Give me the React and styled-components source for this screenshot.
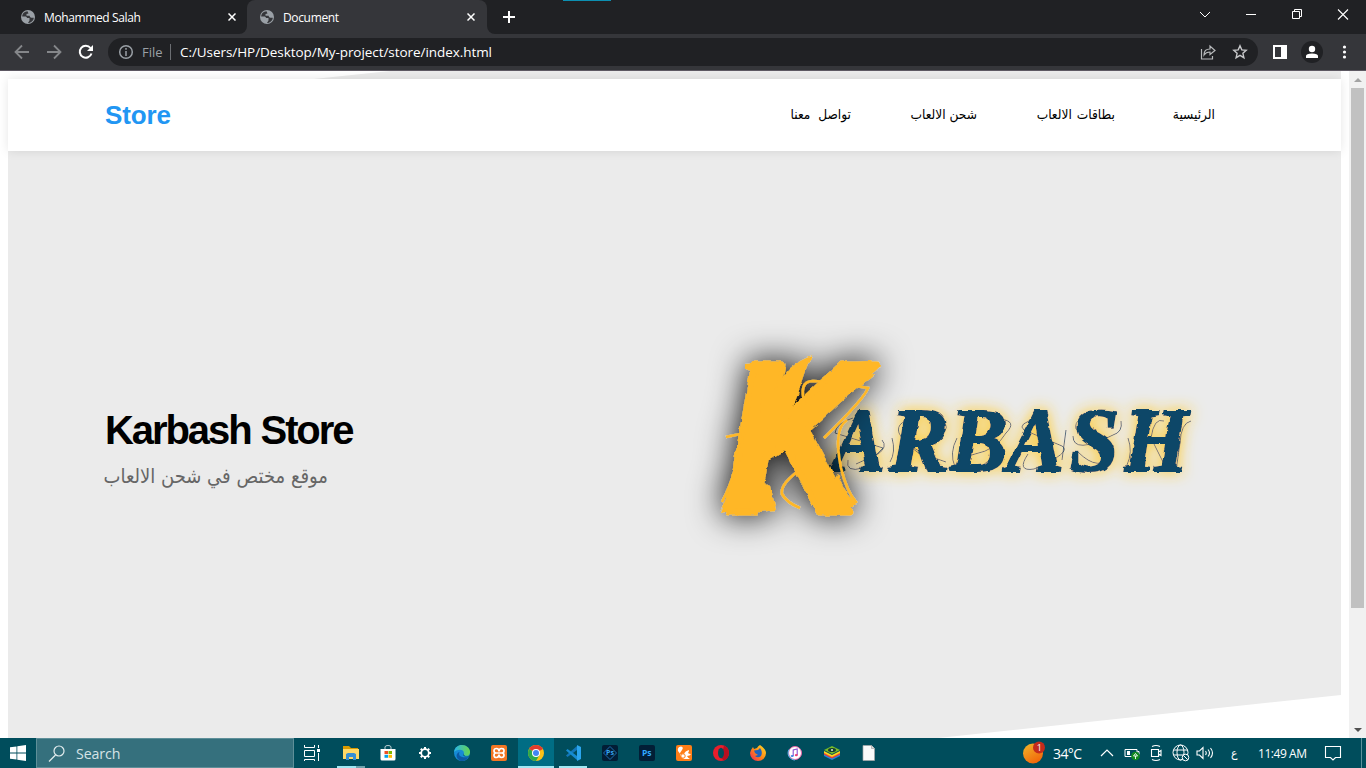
import React from "react";
import styled, { createGlobalStyle } from "styled-components";

const Global = createGlobalStyle`
  *{box-sizing:border-box}
  body{margin:0;background:#fff;overflow:hidden}
  svg{display:block;flex:none}
`;
const ui = `"Open Sans","Noto Sans",sans-serif`;
const arabic = `"DejaVu Sans Condensed","DejaVu Sans",sans-serif`;

const Desktop = styled.div`
  width:1366px;height:768px;display:flex;flex-direction:column;overflow:hidden;font-family:${ui};
`;

/* ---------- browser frame ---------- */
const TabStrip = styled.div`
  height:34px;background:#202124;display:flex;color:#fff;flex:none;position:relative;
`;
const Tab = styled.div`
  width:${p => p.$w}px;height:34px;display:flex;align-items:center;
  padding:0 ${p => (p.$active ? 12 : 11)}px 0 ${p => p.$pad}px;font-size:12px;
  letter-spacing:${p => p.$ls || 0}px;
  background:${p => (p.$active ? "#35363a" : "#202124")};
  border-radius:${p => (p.$active ? "8px 8px 0 0" : "0 0 8px 0")};
`;
const TabSlot = styled.div`
  background:${p => (p.$under ? "#35363a" : "transparent")};
  ${p => p.$fill && "flex:1;display:flex;"}
`;
const TabTitle = styled.span`margin-left:8px;flex:1;white-space:nowrap;`;
const NewTab = styled.div`
  flex:1;background:#202124;border-bottom-left-radius:8px;padding:10px 0 0 15px;
`;
const Captions = styled.div`display:flex;gap:30px;padding:6px 15px 0 0;background:#202124;`;
const Accent = styled.div`position:absolute;left:563px;top:0;width:48px;height:1px;background:#0c8fb1;`;

const Toolbar = styled.div`
  height:37px;background:#35363a;border-bottom:1px solid #5d5862;display:flex;align-items:center;
  padding:0 0 0 14px;flex:none;
`;
const NavButtons = styled.div`display:flex;gap:16px;width:94px;`;
const Address = styled.div`
  height:28px;width:1150px;border-radius:14px;background:#202124;display:flex;align-items:center;
  padding:0 10px 0 10px;color:#fff;font-size:13.5px;
`;
const Scheme = styled.span`color:#9aa0a6;margin-left:8px;width:28px;font-size:13px;`;
const Divider = styled.i`width:1px;height:16px;background:#6b6e72;margin-right:9px;`;
const Url = styled.span`flex:1;white-space:nowrap;font-size:13.5px;letter-spacing:-.06px;`;
const AddressActions = styled.div`display:flex;gap:16px;`;
const ToolbarActions = styled.div`display:flex;align-items:center;gap:10px;margin-left:14px;`;
const Avatar = styled.div`
  width:22px;height:22px;border-radius:50%;background:#202124;display:grid;place-items:center;margin-left:3px;
`;

/* ---------- page ---------- */
const Viewport = styled.div`height:667px;display:flex;background:#fff;flex:none;`;
const Page = styled.div`
  width:1349px;height:667px;display:grid;padding:0 8px;overflow:hidden;
`;
const Backdrop = styled.div`
  grid-area:1/1;background:#ebebeb;
  clip-path:polygon(0 40px,382px 0,100% 0,100% 624px,930px 100%,0 100%);
`;
const Content = styled.div`grid-area:1/1;padding-top:8px;position:relative;`;
const Navbar = styled.nav`
  height:72px;background:#fff;box-shadow:0 0 10px rgba(0,0,0,.1);display:flex;align-items:center;
  justify-content:space-between;padding:0 126px 0 97px;
`;
const Brand = styled.div`
  font:bold 26px "Liberation Sans",Arial,sans-serif;color:#2196f3;line-height:72px;letter-spacing:-.1px;
`;
const Links = styled.div`display:flex;gap:59px;font:13.6px ${arabic};color:#000;line-height:20px;`;
const NavLink = styled.a`
  width:${p => p.$w}px;white-space:nowrap;direction:rtl;word-spacing:${p => p.$ws || 0}px;
  position:relative;top:-1px;
`;
const Hero = styled.section`display:flex;padding-left:97px;`;
const Intro = styled.div`width:585px;padding-top:255px;`;
const Title = styled.h1`
  margin:0;font:bold 40px "Liberation Sans",Arial,sans-serif;line-height:48px;letter-spacing:-2.08px;
  word-spacing:1px;color:#000;
`;
const Lead = styled.p`
  margin:6px 0 0;font:20px ${arabic};line-height:32px;color:#666;direction:rtl;width:223px;white-space:nowrap;
`;
const Logo = styled.svg`margin-top:179px;overflow:visible;`;

const Scrollbar = styled.div`
  width:17px;background:#f1f1f1;display:flex;flex-direction:column;align-items:center;
`;
const Arrow = styled.div`height:17px;display:grid;place-items:center;`;
const Track = styled.div`flex:1;`;
const Thumb = styled.div`width:13px;height:520px;background:#c1c1c1;`;

/* ---------- taskbar ---------- */
const Taskbar = styled.div`
  height:30px;background:#004d5c;display:flex;align-items:stretch;color:#fff;flex:none;
`;
const Start = styled.div`width:36px;display:grid;place-items:center;`;
const Search = styled.div`
  width:258px;background:#35707d;border:1px solid #5e8f99;display:flex;align-items:center;
  padding-left:11px;gap:11px;font-size:14.2px;letter-spacing:-.1px;color:#d5e3e6;
`;
const TaskView = styled.div`width:37px;padding:7px 0 0 10px;`;
const Apps = styled.div`display:flex;gap:1px;width:690px;padding-left:2px;`;
const AppButton = styled.div`
  width:36px;display:flex;flex-direction:column;align-items:center;padding-top:7px;
  background:${p => (p.$active ? "#006d84" : "transparent")};
  justify-content:space-between;flex:none;
`;
const Running = styled.i`
  width:${p => p.$w}px;height:2px;
  background:${p => (p.$stack ? "linear-gradient(90deg,#9fe7f2 19px,#6fa3ad 19px)" : "#a0e8f3")};
`;
const Tray = styled.div`display:flex;align-items:center;flex:1;`;
const TrayIcon = styled.div`width:${p => p.$w}px;display:grid;place-items:center;flex:none;`;
const TrayText = styled.div`
  width:${p => p.$w}px;font-size:${p => p.$size || 12}px;white-space:nowrap;letter-spacing:${p => p.$ls || 0}px;
  font-family:${p => (p.$ar ? arabic : ui)};padding-left:${p => p.$indent || 0}px;flex:none;
`;
const Peek = styled.div`width:1px;align-self:stretch;background:#5b929c;margin-left:19px;`;

const Globe = () => (
  <svg width="16" height="16" viewBox="0 0 16 16">
    <circle cx="8" cy="8" r="7" fill="#9aa0a6" />
    <path d="M7.500 2.300C4.500 2.400 2.300 4.600 2.200 7.500H5c1.300 0 2 .7 2 1.500h2.500v2.500L8 14c3.300-.2 5.700-2.600 5.800-5.300h-2.300c-1.300 0-1.800-1-1.800-1.900H6.500V5l2-.5z" fill="#35363a" />
  </svg>
);
const Cross = ({ s = 8, w = 1.5 }) => (
  <svg width={s} height={s} viewBox="0 0 8 8"><path d="M.5.5l7 7m0-7l-7 7" stroke="#fff" strokeWidth={w} /></svg>
);
const Line = ({ d, w = 16, h = 16, c = "#fff", sw = 1.2, children }) => (
  <svg width={w} height={h} viewBox={`0 0 ${w} ${h}`} fill="none" stroke={c} strokeWidth={sw}><path d={d} />{children}</svg>
);

const letters = [
  ["A", 832, 53], ["R", 889, 60], ["B", 950, 57], ["A", 1007, 57], ["S", 1069, 50], ["H", 1124, 64]
];

const KarbashLogo = () => (
  <Logo width="530" height="230" viewBox="690 330 530 230">
    <defs>
      <filter id="rough" x="-20%" y="-20%" width="140%" height="140%">
        <feTurbulence type="fractalNoise" baseFrequency=".12" numOctaves="2" seed="4" />
        <feDisplacementMap in="SourceGraphic" scale="4" xChannelSelector="R" yChannelSelector="G" />
      </filter>
      <filter id="gold" x="-10%" y="-50%" width="120%" height="200%">
        <feDropShadow dx="0" dy="0" stdDeviation="7.5" floodColor="#ffc928" floodOpacity="1" />
      </filter>
      <filter id="dark" x="-50%" y="-50%" width="200%" height="200%">
        <feDropShadow dx="0" dy="0" stdDeviation="17" floodColor="#000" floodOpacity="1" />
      </filter>
    </defs>
    <g filter="url(#gold)">
      <g filter="url(#rough)" fill="#0b4767" stroke="#0b4767" strokeWidth="2.2" fontFamily="'Liberation Serif',serif" fontWeight="bold" fontStyle="italic" fontSize="91">
        {letters.map(([c, x, w], i) => (
          <text key={i} x={x} y="471" textLength={w} lengthAdjust="spacingAndGlyphs">{c}</text>
        ))}
      </g>
      <g fill="none" stroke="#0b4767" strokeWidth="1" strokeOpacity=".8">
        <path d="M853 418q-17 5-18 15l48 15-20 20q-18 5-15-8M882 440q6 7-4 14l-22 10" />
        <path d="M920 418q-25 2-21 15 7 16 47 29M943 422q14 10-31 26l29 22M892 438q4 14-2 24" />
        <path d="M1000 419q18 2 6 14-10 17-31 21-25 7-17 15M957 438q-8 15-2 29 18 11 37-10" />
        <path d="M1038 418q-22 6-14 12l38 16q11 6-28 23-18 3-6-15M1066 430l-4 30" />
        <path d="M1098 414q-25 3-22 15 35 18 37 26-14 18-35-3M1073 436q0 19 40-1 10-3 8-14" />
        <path d="M1164 421q-10-4-13 17l14 28q8-2 6-24M1191 421q-10 2-11 22l-4 28M1128 438q5 14-1 27" />
      </g>
    </g>
    <g filter="url(#dark)">
      <g filter="url(#rough)" fill="#ffb726" stroke="#ffb726" strokeLinejoin="round">
        <text x="725" y="512" textLength="140" lengthAdjust="spacingAndGlyphs" fontFamily="'Liberation Sans',sans-serif" fontWeight="bold" fontStyle="italic" fontSize="213" strokeWidth="7">K</text>
        <path stroke="none" d="M745 365l37-2-7 28Q786 364 812 356q-8 14-14 38l-16 40-22-18 1-40-16-7z" />
        <path stroke="none" d="M822 378q19-17 50-17l-13 14 16-1-20 16-20 8z" />
        <path stroke="none" d="M738 470l-18 43q17-2 29-16l2 16 25-3-6-24z" />
        <path stroke="none" d="M838 474q8 23 20 29l-20 13-22-9z" />
      </g>
      <g fill="none" stroke="#ffb726" strokeWidth="2.600">
        <path d="M726 437l14-3q-1 36-18 68" />
        <path d="M805 405q-7-24 8-24l16 1M856 386l12 2q-3 10-44 50M847 420q-14 9-6 48 6 24 15 34M797 472q-17 13-15 22 5 9 18 14" />
      </g>
    </g>
  </Logo>
);

const Shell = ({ bg, children }) => (
  <svg width="16" height="16" viewBox="0 0 16 16"><rect width="16" height="16" rx="2" fill={bg} />{children}</svg>
);
const Explorer = () => <svg width="18" height="16" viewBox="0 0 18 16"><path d="M1 1h6l2 2h7v3H1z" fill="#d99a00" /><path d="M1 4h16v10H1z" fill="#ffd866" /><path d="M4 15V9l2-1h6l2 1v6h-3v-3H7v3z" fill="#368ed4" /></svg>;
const Store = () => <svg width="16" height="16" viewBox="0 0 16 16"><path d="M5 4V2q0-1.5 3-1.5T11 2v2" fill="none" stroke="#b9cdd1" /><path d="M.5 4h15v10q0 1.5-1.5 1.5H2Q.5 15.5.5 14z" fill="#fff" /><path d="M4.5 6H8v3H4.5z" fill="#ef5025" /><path d="M8.5 6H12v3H8.5z" fill="#7fb900" /><path d="M4.5 9.8H8v3H4.5z" fill="#00a3ee" /><path d="M8.5 9.8H12v3H8.5z" fill="#ffb800" /></svg>;
const Gear = () => <svg width="16" height="16" viewBox="0 0 16 16"><circle cx="8" cy="8" r="3.8" fill="none" stroke="#fff" strokeWidth="1.8" />{[0, 45, 90, 135].map(a => <path key={a} transform={`rotate(${a} 8 8)`} d="M8 2v2.2M8 11.8V14" stroke="#fff" strokeWidth="2" />)}</svg>;
const Edge = () => <svg width="16" height="16" viewBox="0 0 16 16"><defs><linearGradient id="eg"><stop stopColor="#28b4e9" /><stop offset="1" stopColor="#66d64d" /></linearGradient></defs><circle cx="8" cy="8" r="8" fill="#168bd5" /><path d="M0 7C1 2 4 0 8 0c6 0 10 6 7 10-1.5 1.5-6 1-5.2-1C11 5 5 3 0 7z" fill="url(#eg)" /><path d="M5.5 7Q3 13 14.5 12.3 11 17 6 15.7C1 13 2 8 5.500 7z" fill="#0c59a4" /><path d="M9.800 8.200Q8 11 12 11.500h3L16 10q-2 2-5 1-2-1-1.200-2.800z" fill="#004d5c" /></svg>;
const Xampp = () => <Shell bg="#f37623"><path d="M8 6.500Q8 3.500 5.500 3.500T3 5.700 5 8q-2 0-2 2.300t2.500 2.200T8 9.500q0 3 2.500 3t2.500-2.200T11 8q2 0 2-2.300t-2.500-2.200T8 6.500zM5 8h6" fill="none" stroke="#fff" strokeWidth="1.700" /></Shell>;
const Chrome = () => <svg width="16" height="16" viewBox="0 0 16 16"><circle cx="8" cy="8" r="8" fill="#fbc116" /><path d="M8 8L1.100 4A8 8 0 0 1 14.900 4z" fill="#e33b2e" /><path d="M8 8L1.100 4A8 8 0 0 0 8 16l3.500-6z" fill="#2da94f" /><circle cx="8" cy="8" r="4" fill="#fff" /><circle cx="8" cy="8" r="3" fill="#4285f4" /></svg>;
const Code = () => <svg width="17" height="16" viewBox="0 0 17 16"><path d="M12 1L1 10.500 2.500 12 12 5z" fill="#1276b8" /><path d="M12 15L1 5.500 2.500 4 12 11z" fill="#168bd1" /><path d="M12 0l4 2v12l-4 2z" fill="#2ba5ed" /></svg>;
const PsExpress = () => <Shell bg="#021d35"><path d="M8 1.500L14.500 8 8 14.500 1.500 8z" fill="none" stroke="#1d6bad" /><text x="4" y="10.200" fontSize="7" fontWeight="bold" fontFamily="Open Sans" fill="#36a5f4">Ps</text></Shell>;
const Ps = () => <Shell bg="#021e36"><text x="3" y="10.800" fontSize="8.500" fontWeight="bold" fontFamily="Open Sans" fill="#31a8ff">Ps</text></Shell>;
const Uc = () => <Shell bg="#ff7e17"><path d="M2 6Q1 2 5 1.500q3 .5 1 3.500L4 8q0 4 4 6h6q-2-1-3-3 3 0 4-2-2 0-3-1 1-1 1-3-4 1-5 4-2-1-3 1" fill="#fff" /><circle cx="7" cy="11" r="2.200" fill="#fff" stroke="#ff7e17" /></Shell>;
const Opera = () => <svg width="16" height="16" viewBox="0 0 16 16"><circle cx="8" cy="8" r="8" fill="#e81e2c" /><path d="M11 .600a8 8 0 0 1 0 14.800L8 13z" fill="#b80f20" /><ellipse cx="8" cy="8" rx="3" ry="5.300" fill="#004d5c" /></svg>;
const Firefox = () => <svg width="16" height="16" viewBox="0 0 16 16"><defs><linearGradient id="ff" x1="1" x2="0" y2="1"><stop stopColor="#ffe226" /><stop offset=".5" stopColor="#ff8a16" /><stop offset="1" stopColor="#ef1d5c" /></linearGradient></defs><path d="M1 5l2-3 1 2 3-1Q8 1 10 0q6 4 6 8a8 8 0 0 1-16 0z" fill="url(#ff)" /><path d="M4 5.500l4-.5 2-2q3 4 1 8-3 2.500-6 0l3-1-3-2z" fill="#1e63bd" /></svg>;
const Itunes = () => <svg width="16" height="16" viewBox="0 0 16 16"><circle cx="8" cy="8" r="6.500" fill="#fff" stroke="#ef66aa" /><path d="M2 4.500A7 7 0 0 0 8 15" fill="none" stroke="#5eb9f0" /><path d="M6.200 11V5l4-1v6" fill="none" stroke="#8c4fcf" strokeWidth="1.100" /><ellipse cx="5.200" cy="11" rx="1.500" ry="1.100" fill="#3c88e8" /><ellipse cx="9.300" cy="10.200" rx="1.500" ry="1.100" fill="#ee4179" /></svg>;
const BlueStacks = () => <svg width="18" height="16" viewBox="0 0 18 16"><path d="M1 9l8 4 8-4v2l-8 4-8-4z" fill="#2083df" /><path d="M1 7.500l8 4 8-4v2l-8 4-8-4z" fill="#ed3f37" /><path d="M1 6l8 4 8-4v2l-8 4-8-4z" fill="#ffd51c" /><path d="M1 5l8-4 8 4-8 4z" fill="#77bb27" /><ellipse cx="9" cy="5" rx="4" ry="2" fill="#173d33" /><circle cx="9" cy="5" r="1" fill="#d9f2cf" /></svg>;
const Doc = () => <svg width="16" height="16" viewBox="0 0 16 16"><path d="M2 .500h8.500l3 3v12H2z" fill="#fafafa" stroke="#a6a6a6" strokeWidth=".7" /><path d="M10.500.500v3h3" fill="#ddd" stroke="#999" strokeWidth=".6" /></svg>;

const apps = [
  { I: Explorer, w: 28, stack: true }, { I: Store }, { I: Gear }, { I: Edge }, { I: Xampp },
  { I: Chrome, w: 36, active: true }, { I: Code, w: 28 }, { I: PsExpress }, { I: Ps }, { I: Uc },
  { I: Opera }, { I: Firefox }, { I: Itunes }, { I: BlueStacks }, { I: Doc }
];

export default function App() {
  return (
    <Desktop>
      <Global />
      <TabStrip>
        <TabSlot $under><Tab $w={247} $pad={20} $ls={-0.38}><Globe /><TabTitle>Mohammed Salah</TabTitle><Cross /></Tab></TabSlot>
        <Tab $w={240} $pad={12} $active $ls={-0.35}><Globe /><TabTitle>Document</TabTitle><Cross /></Tab>
        <TabSlot $under $fill>
          <NewTab><Line w={14} h={14} sw={2} d="M7 1v12M1 7h12" /></NewTab>
          <Captions>
            <Line w={16} h={16} sw={1} d="M3 6l5 5 5-5" />
            <Line w={16} h={16} sw={1} d="M3 8.500h10" />
            <Line w={16} h={16} sw={1} d="M3.500 5.500h7v7h-7zM5.500 5V3.500h7v7H11" />
            <Line w={16} h={16} sw={1.100} d="M3 3.500l10 10M13 3.500l-10 10" />
          </Captions>
        </TabSlot>
        <Accent />
      </TabStrip>
      <Toolbar>
        <NavButtons>
          <Line sw={1.800} c="#85878a" d="M15 8H2M8 1.500L1.500 8 8 14.500" />
          <Line sw={1.800} c="#85878a" d="M1 8h13M8 1.500L14.500 8 8 14.500" />
          <svg width="16" height="16" viewBox="0 0 16 16"><path d="M13.500 9.500A6 6 0 1 1 12.500 4" fill="none" stroke="#fff" strokeWidth="2" /><path d="M15 1v6H9z" fill="#fff" /></svg>
        </NavButtons>
        <Address>
          <Line sw={1.500} c="#9aa0a6" d="M8 7v5M8 4v1.700"><circle cx="8" cy="8" r="6.300" /></Line>
          <Scheme>File</Scheme><Divider />
          <Url>C:/Users/HP/Desktop/My-project/store/index.html</Url>
          <AddressActions>
            <Line c="#b7b9bb" d="M1.500 5v10h11v-3M4 11q0-6 6-6V2l5 4.500-5 4V8q-4 0-6 3z" />
            <Line c="#c7c8ca" sw={1.400} d="M8 1.800l1.800 4.100 4.400.4-3.300 3 1 4.400L8 11.400l-3.900 2.300 1-4.400-3.300-3 4.400-.4z" />
          </AddressActions>
        </Address>
        <ToolbarActions>
          <Line w={16} h={16} c="#fff" sw={2} d="M2 2h12v12H2z"><path d="M9 1h6v14H9z" fill="#fff" stroke="none" /></Line>
          <Avatar><svg width="14" height="14" viewBox="0 0 14 14" fill="#fff"><circle cx="7" cy="4" r="3.200" /><path d="M1 13v-2q0-2.500 6-2.500t6 2.500v2z" /></svg></Avatar>
          <svg width="22" height="16" viewBox="0 0 22 16" fill="#fff"><circle cx="11.500" cy="3" r="1.600" /><circle cx="11.500" cy="8" r="1.600" /><circle cx="11.500" cy="13" r="1.600" /></svg>
        </ToolbarActions>
      </Toolbar>

      <Viewport>
        <Page>
          <Backdrop />
          <Content>
            <Navbar>
              <Brand>Store</Brand>
              <Links>
                <NavLink $w={62} $ws={4}>تواصل معنا</NavLink>
                <NavLink $w={67}>شحن الالعاب</NavLink>
                <NavLink $w={79} $ws={1}>بطاقات الالعاب</NavLink>
                <NavLink $w={41}>الرئيسية</NavLink>
              </Links>
            </Navbar>
            <Hero>
              <Intro><Title>Karbash Store</Title><Lead>موقع مختص في شحن الالعاب</Lead></Intro>
              <KarbashLogo />
            </Hero>
          </Content>
        </Page>
        <Scrollbar>
          <Arrow><svg width="8" height="4" viewBox="0 0 8 4"><path d="M0 4l4-4 4 4z" fill="#a3a3a3" /></svg></Arrow>
          <Track><Thumb /></Track>
          <Arrow><svg width="8" height="4" viewBox="0 0 8 4"><path d="M0 0l4 4 4-4z" fill="#505050" /></svg></Arrow>
        </Scrollbar>
      </Viewport>

      <Taskbar>
        <Start><svg width="16" height="16" viewBox="0 0 16 16" fill="#fff"><path d="M0 2.300L6.500 1.400v6.100H0zM7.300 1.300L16 0v7.500H7.300zM0 8.500h6.500v6.100L0 13.700zM7.300 8.500H16V16l-8.700-1.300z" /></svg></Start>
        <Search><Line w={17} h={17} c="#e2ecee" d="M7.500 10L1 16.500"><circle cx="11" cy="6" r="5" /></Line>Search</Search>
        <TaskView><svg width="16" height="16" viewBox="0 0 16 16" fill="none" stroke="#fff"><path d="M.500 0v2.500h10V0M.500 5.500h10v6H.500zM.500 16v-1.500h10V16M14.500 0v3M14.500 8v8" /><path d="M13 4h3v3h-3z" fill="#fff" stroke="none" /></svg></TaskView>
        <Apps>
          {apps.map(({ I, w, active, stack }, i) => (
            <AppButton key={i} $active={active}><I />{w && <Running $w={w} $stack={stack} />}</AppButton>
          ))}
        </Apps>
        <Tray>
          <TrayIcon $w={32}><svg width="28" height="26" viewBox="0 0 28 26"><defs><linearGradient id="sun" x2=".6" y2="1"><stop stopColor="#f1b82c" /><stop offset="1" stopColor="#f2670a" /></linearGradient></defs><circle cx="10" cy="13.500" r="10" fill="url(#sun)" /><circle cx="16" cy="7.500" r="6" fill="#c42b1c" /><text x="13.800" y="11" fontSize="9" fill="#fff" fontFamily="Open Sans">1</text></svg></TrayIcon>
          <TrayText $w={41} $size={14} $ls={-0.6}>34°C</TrayText>
          <TrayIcon $w={26}><Line w={14} h={8} d="M1 7l6-6 6 6" /></TrayIcon>
          <TrayIcon $w={24}><svg width="16" height="16" viewBox="0 0 16 16"><path d="M1 4.500h12v7H1zM13.500 6.500H15v3" fill="none" stroke="#fff" /><path d="M3 6h3v4H3z" fill="#fff" /><circle cx="11.500" cy="11" r="4.300" fill="#108a20" /><path d="M11.500 14v-3M11.500 8.500l2 2.500h-4z" stroke="#fff" strokeWidth=".9" fill="none" /></svg></TrayIcon>
          <TrayIcon $w={24}><Line w={14} h={18} sw={1.100} d="M3 2.500q4-2 8 0M3 15.500q4 2 8 0M2.500 5.500h7v7h-7zM9.500 8l2.500-1.500v5L9.500 10" /></TrayIcon>
          <TrayIcon $w={25}><svg width="18" height="18" viewBox="0 0 18 18" fill="none" stroke="#fff"><circle cx="8.500" cy="8.500" r="7.500" /><ellipse cx="8.500" cy="8.500" rx="3.500" ry="7.500" /><path d="M1.500 6h14M1.500 11h14" /><circle cx="13.500" cy="13.500" r="3.300" fill="#004d5c" /><path d="M11.300 11.300l4.400 4.400" /></svg></TrayIcon>
          <TrayIcon $w={24}><Line w={18} h={16} sw={1.100} d="M1 6h2.500L7 2.500v11L3.500 10H1zM9.500 6q1.500 2 0 4M12 4.500q3 3.500 0 7M14.500 3q4 5 0 10" /></TrayIcon>
          <TrayText $w={41} $ar $indent={14}>ع</TrayText>
          <TrayText $w={66} $size={12} $ls={-0.45}>11:49 AM</TrayText>
          <Line w={18} h={17} sw={1.100} d="M1.500 1.500h15v11h-5L9 15l-2.500-2.500h-5z" />
          <Peek />
        </Tray>
      </Taskbar>
    </Desktop>
  );
}
